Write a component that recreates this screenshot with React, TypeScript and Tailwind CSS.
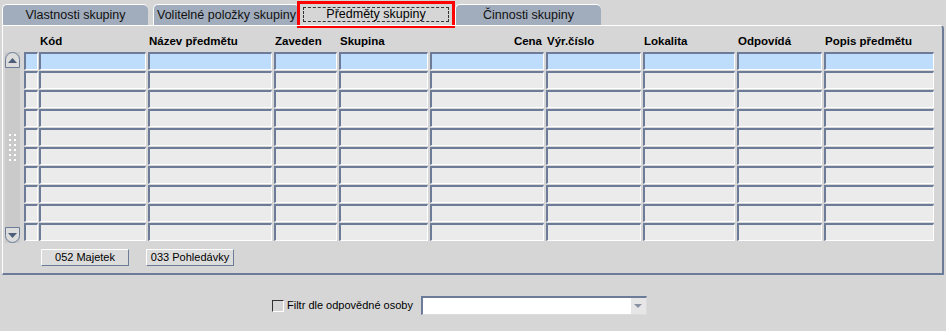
const cols = [
  { name: "Kód", w: 107, align: "left" },
  { name: "Název předmětu", w: 124, align: "left" },
  { name: "Zaveden", w: 63, align: "left" },
  { name: "Skupina", w: 89, align: "left" },
  { name: "Cena", w: 114, align: "right" },
  { name: "Výr.číslo", w: 95, align: "left" },
  { name: "Lokalita", w: 92, align: "left" },
  { name: "Odpovídá", w: 85, align: "left" },
  { name: "Popis předmětu", w: 110, align: "left" },
];

const rows = [0, 1, 2, 3, 4, 5, 6, 7, 8, 9];

function Field({ w, active }: { w: number; active: boolean }) {
  return (
    <div
      className={`h-[18px] border-t-2 border-l-2 border-b border-r border-t-[#6b7b98] border-l-[#6b7b98] border-b-white border-r-white ${
        active ? "bg-[#bedcfc]" : "bg-[#ebebeb]"
      }`}
      style={{ width: w }}
    />
  );
}

function Tab({ label, active }: { label: string; active?: boolean }) {
  if (active) {
    return (
      <div className="w-[158px] h-[27px] -mb-[2px] border-[3px] border-[#ff0000] bg-[#d6d6d6] p-[3px] z-10">
        <div className="h-full border border-dashed border-[#333] flex items-center justify-center text-[12.5px] text-black">
          {label}
        </div>
      </div>
    );
  }
  return (
    <div className="w-[146px] h-[22px] mt-[3px] rounded-t-[5px] bg-[#a1acbc] border-t border-l border-white flex items-center justify-center text-[12.5px] text-[#111]">
      {label}
    </div>
  );
}

export default function App() {
  return (
    <div
      className="w-[946px] h-[331px] bg-[#d6d6d6] overflow-hidden"
      style={{ fontFamily: '"Liberation Sans", Arial, sans-serif' }}
    >
      {/* Tabs */}
      <div className="flex items-start h-[25px] pl-[2px] pt-[1px]">
        <Tab label="Vlastnosti skupiny" />
        <div className="ml-[5px]">
          <Tab label="Volitelné položky skupiny" />
        </div>
        <div className="-ml-[2px]">
          <Tab label="Předměty skupiny" active />
        </div>
        <Tab label="Činnosti skupiny" />
      </div>

      {/* Panel */}
      <div className="ml-[2px] w-[942px] h-[250px] border-t border-l border-white border-r-2 border-b-2 border-r-[#6b7b98] border-b-[#6b7b98] rounded-tr-[4px] relative">
        {/* Header */}
        <div className="flex h-[26px] items-end pb-[2px] pl-[37px] gap-[2px] text-[11.5px] font-bold text-black">
          {cols.map((c) => (
            <div
              key={c.name}
              className={c.align === "right" ? "text-right pr-[3px]" : "pl-[0px]"}
              style={{ width: c.w }}
            >
              {c.name}
            </div>
          ))}
        </div>

        <div className="flex pl-[2px]">
          {/* Scrollbar */}
          <div className="w-[15px] h-[191px] bg-[#cacaca] flex flex-col items-center justify-between">
            <div className="w-[15px] h-[16px] rounded-t-[8px] border border-[#6b7b98] bg-[#dcdcdc] flex items-center justify-center">
              <svg width="9" height="5" viewBox="0 0 9 5">
                <path d="M0 5 L4.5 0 L9 5 Z" fill="#4d5d7a" />
              </svg>
            </div>
            <div className="grid grid-cols-2 gap-x-[3px] gap-y-[3px]">
              {Array.from({ length: 12 }).map((_, i) => (
                <div key={i} className="w-[2px] h-[2px] bg-white" />
              ))}
            </div>
            <div className="w-[15px] h-[16px] rounded-b-[8px] border border-[#6b7b98] bg-[#dcdcdc] flex items-center justify-center">
              <svg width="9" height="5" viewBox="0 0 9 5">
                <path d="M0 0 L4.5 5 L9 0 Z" fill="#4d5d7a" />
              </svg>
            </div>
          </div>

          {/* Grid */}
          <div className="ml-[4px] flex flex-col gap-[1px]">
            {rows.map((r) => (
              <div key={r} className="flex gap-[2px]">
                <div className="mr-[-1px]">
                  <Field w={14} active={r === 0} />
                </div>
                {cols.map((c) => (
                  <Field key={c.name} w={c.w} active={r === 0} />
                ))}
              </div>
            ))}
          </div>
        </div>

        {/* Buttons */}
        <div className="flex gap-[17px] pl-[38px] mt-[6px]">
          <button className="w-[88px] h-[17px] bg-[#dcdcdc] border border-t-white border-l-white border-r-[#6b7b98] border-b-[#6b7b98] text-[11px] text-black leading-none">
            052 Majetek
          </button>
          <button className="w-[88px] h-[17px] bg-[#dcdcdc] border border-t-white border-l-white border-r-[#6b7b98] border-b-[#6b7b98] text-[11px] text-black leading-none">
            033 Pohledávky
          </button>
        </div>
      </div>

      {/* Filter */}
      <div className="flex items-center mt-[21px] pl-[272px]">
        <div className="w-[12px] h-[12px] border-t border-l border-[#333] border-r border-b border-r-white border-b-white bg-[#d6d6d6]" />
        <span className="ml-[3px] text-[11px] text-black">Filtr dle odpovědné osoby</span>
        <div className="ml-[8px] w-[226px] h-[19px] bg-white border-t-2 border-l-2 border-t-[#6b7b98] border-l-[#6b7b98] border-r border-b border-r-[#dcdcdc] border-b-[#dcdcdc] flex justify-end">
          <div className="w-[15px] h-full bg-[#e6e6e6] flex items-center justify-center">
            <svg width="8" height="4" viewBox="0 0 8 4">
              <path d="M0 0 L4 4 L8 0 Z" fill="#8a93a3" />
            </svg>
          </div>
        </div>
      </div>
    </div>
  );
}
